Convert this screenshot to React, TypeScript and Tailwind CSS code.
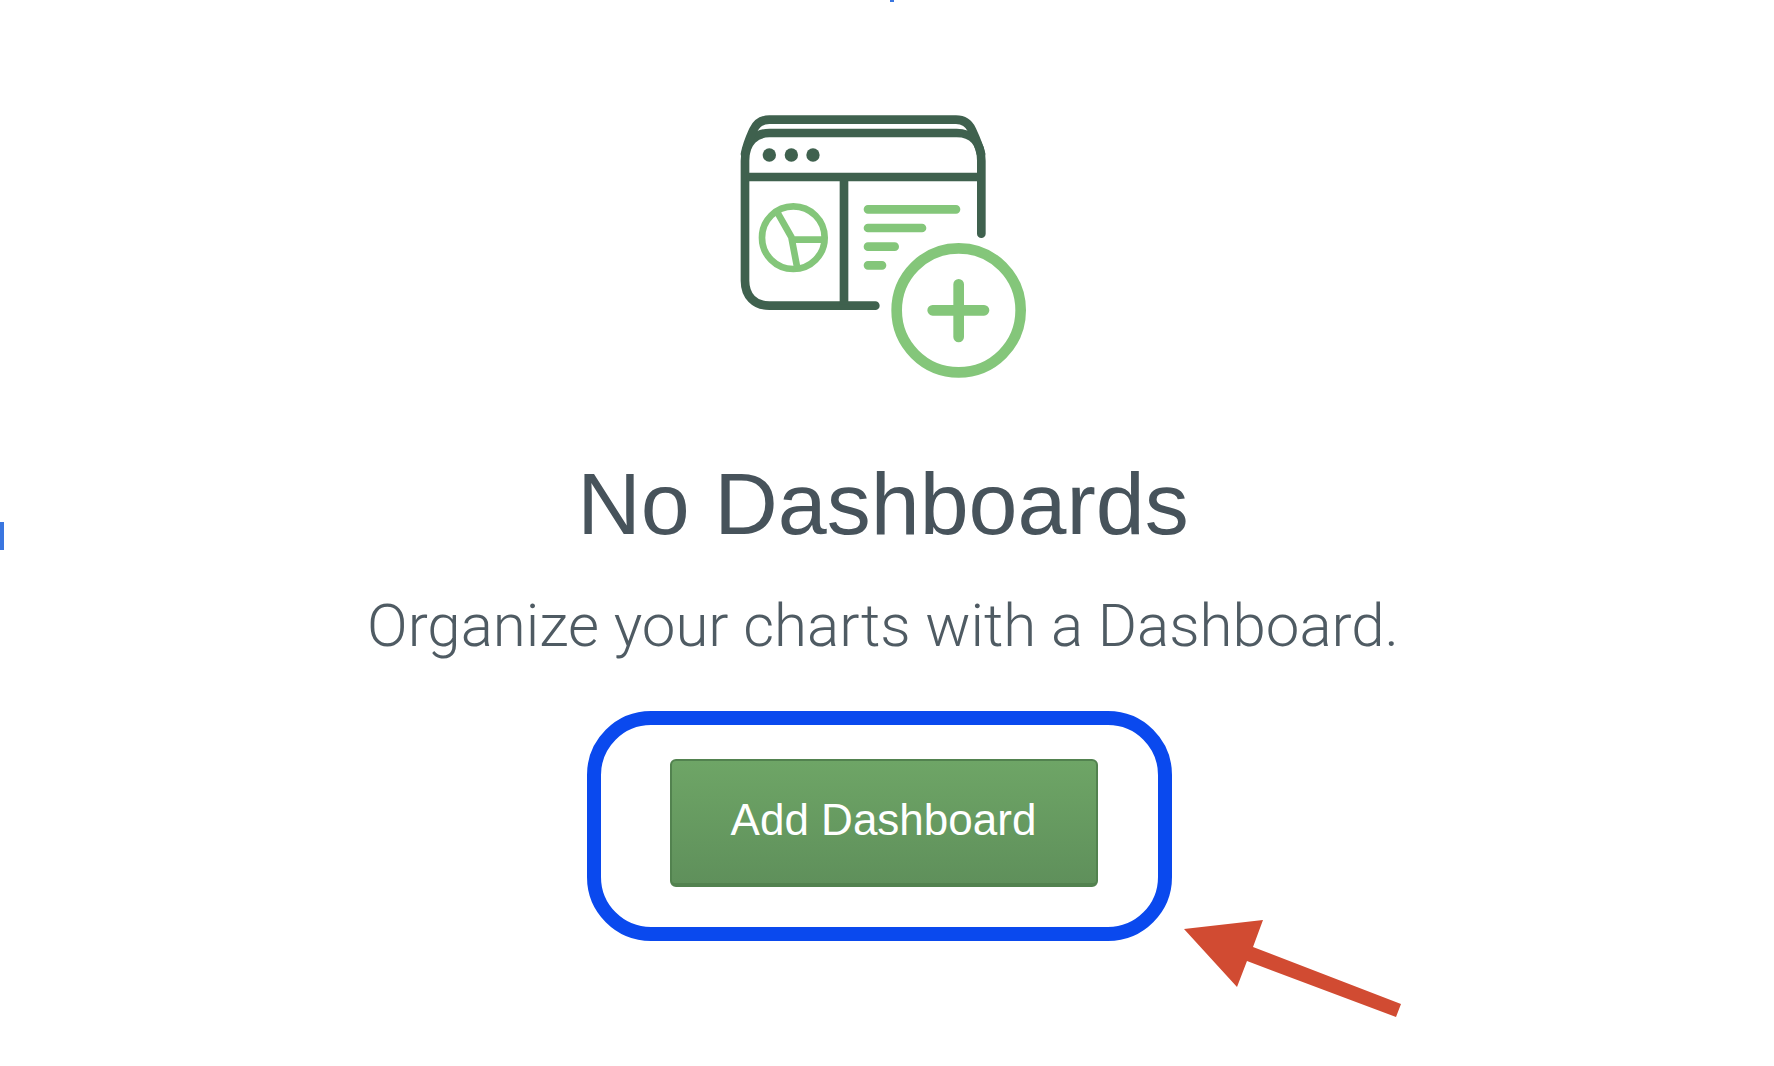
function DashboardIcon() {
  return (
    <svg viewBox="60 40 861 795" className="h-[265px] w-[287px]" fill="none" aria-hidden="true">
      <g stroke="#3f614e" strokeWidth="26" strokeLinecap="round">
        <path d="M784 399V180C784 120 750 97 710 97H148C108 97 75 124 75 180V540C75 586 104 615 148 615H466" />
        <path d="M75 160C82 126 91 108 100 88C110 67 126 57 148 57H708C728 57 746 67 756 88C769 116 778 138 783 160" />
        <path d="M80 229H782M372 229V612" strokeLinecap="butt" />
      </g>
      <g fill="#3f614e">
        <circle cx="148" cy="163" r="20" />
        <circle cx="214" cy="163" r="20" />
        <circle cx="279" cy="163" r="20" />
      </g>
      <g stroke="#84c67a">
        <circle cx="220" cy="411" r="94" strokeWidth="20" />
        <path d="M172 335L214 409L232 503M214 417H310" strokeWidth="20" />
        <g strokeWidth="26" strokeLinecap="round" strokeLinejoin="round">
          <path d="M444 326H708M444 382H606M444 438H524M444 494H486" />
        </g>
        <circle cx="716" cy="629" r="186" strokeWidth="32" />
        <path d="M716 551V709M638 629H792" strokeWidth="32" strokeLinecap="round" />
      </g>
    </svg>
  );
}

function PointerArrow() {
  return (
    <svg
      viewBox="0 0 217 98"
      className="pointer-events-none absolute top-[194px] left-[583px] h-[98px] w-[217px]"
      fill="#d14b32"
      aria-hidden="true"
    >
      <path d="M0 10L79 1L69 28L217 85L212 98L63 42L53 68Z" />
    </svg>
  );
}

export default function App() {
  return (
    <div className="relative min-h-screen overflow-hidden bg-white font-['Liberation_Sans',Arial,sans-serif]">
      <span className="absolute top-0 left-[890px] h-0.5 w-1 bg-[#3a76e0]" />
      <span className="absolute top-[522px] left-0 h-7 w-1 bg-[#3a76e0]" />

      <main className="flex flex-col items-center pt-[114px] pr-2 text-center">
        <DashboardIcon />
        <h1 className="mt-[75px] text-[88px] leading-[100px] text-[#47535b]">No Dashboards</h1>
        <p className="mt-8 font-['Roboto',sans-serif] text-[60px] leading-[80px] font-light text-[#4f5b63]">
          Organize your charts with a Dashboard.
        </p>
        <div className="relative mt-[45px] mr-2 rounded-[64px] border-14 border-[#0a49ee] pt-[34px] pr-[60px] pb-10 pl-[69px]">
          <button
            type="button"
            className="block h-32 w-[428px] rounded-md border-2 border-b-4 border-[#52824f] bg-linear-to-b from-[#6ea566] to-[#5f905b] pb-1 text-[44px] text-white"
          >
            Add Dashboard
          </button>
          <PointerArrow />
        </div>
      </main>
    </div>
  );
}
